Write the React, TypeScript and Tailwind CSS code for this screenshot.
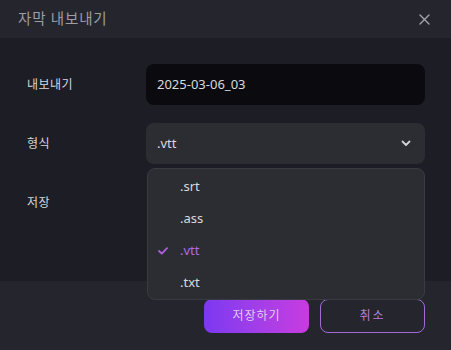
import React from "react";

const font = { fontFamily: '"Noto Sans", "Noto Sans CJK KR", sans-serif' };

export default function App() {
  const items = [".srt", ".ass", ".vtt", ".txt"];
  return (
    <div
      className="w-[451px] h-[350px] flex flex-col bg-[#1d1e25] overflow-hidden"
      style={font}
    >
      <div className="h-[38px] shrink-0 bg-[#25262d] flex items-center justify-between pl-[18px] pr-[21px]">
        <span className="text-[14.5px] text-[#9d9ea6] tracking-[0.8px]">자막 내보내기</span>
        <svg width="11" height="11" viewBox="0 0 11 11" className="text-[#a4a5ab]">
          <path d="M1 1L10 10M10 1L1 10" stroke="currentColor" strokeWidth="1.4" strokeLinecap="round" />
        </svg>
      </div>
      <div className="flex-1 pt-[26px] pl-[27px] grid grid-cols-[119px_279px] auto-rows-[41px] gap-y-[18px] content-start">
        <div className="flex items-center text-[12px] text-[#d6d7dc] tracking-[0.5px]">내보내기</div>
        <div className="bg-[#0b0b0f] rounded-[8px] flex items-center px-[11px] text-[13px] text-[#d9dade]">
          2025-03-06_03
        </div>
        <div className="flex items-center text-[12px] text-[#d6d7dc] tracking-[0.5px]">형식</div>
        <div className="relative">
          <div className="h-full bg-[#2c2d33] rounded-[8px] flex items-center justify-between px-[11px] pr-[14px] text-[13px] text-[#d9dade]">
            <span>.vtt</span>
            <svg width="10" height="7" viewBox="0 0 10 7">
              <path d="M1.5 1.5L5 5L8.5 1.5" fill="none" stroke="#d0d1d6" strokeWidth="1.8" strokeLinecap="round" strokeLinejoin="round" />
            </svg>
          </div>
          <div className="absolute left-[1px] top-[45px] w-[278px] h-[132px] bg-[#2c2d33] border border-[#3a3b41] rounded-[8px] z-10 flex flex-col pt-[2px]">
            {items.map((it) => (
              <div key={it} className="h-[32.5px] flex items-center relative pl-[32px] text-[13px]">
                {it === ".vtt" && (
                  <svg width="10" height="8" viewBox="0 0 10 8" className="absolute left-[10px]">
                    <path d="M1 4L3.8 6.6L9 1.2" fill="none" stroke="#b15fe0" strokeWidth="1.8" strokeLinecap="round" strokeLinejoin="round" />
                  </svg>
                )}
                <span className={it === ".vtt" ? "text-[#b467e2]" : "text-[#d9dade]"}>{it}</span>
              </div>
            ))}
          </div>
        </div>
        <div className="flex items-center text-[12px] text-[#d6d7dc] tracking-[0.5px]">저장</div>
        <div></div>
      </div>
      <div className="h-[69px] shrink-0 bg-[#25262d] flex justify-end items-start pt-[18px] pr-[26px] gap-[11px]">
        <button className="w-[105px] h-[34px] rounded-[8px] bg-gradient-to-r from-[#7c38f0] to-[#c83be0] text-[12px] text-[#dfcdf3] tracking-[1px]">
          저장하기
        </button>
        <button className="w-[105px] h-[34px] rounded-[8px] border border-[#a46ad6] text-[12px] text-[#b57fd9] tracking-[2px]">
          취소
        </button>
      </div>
    </div>
  );
}
